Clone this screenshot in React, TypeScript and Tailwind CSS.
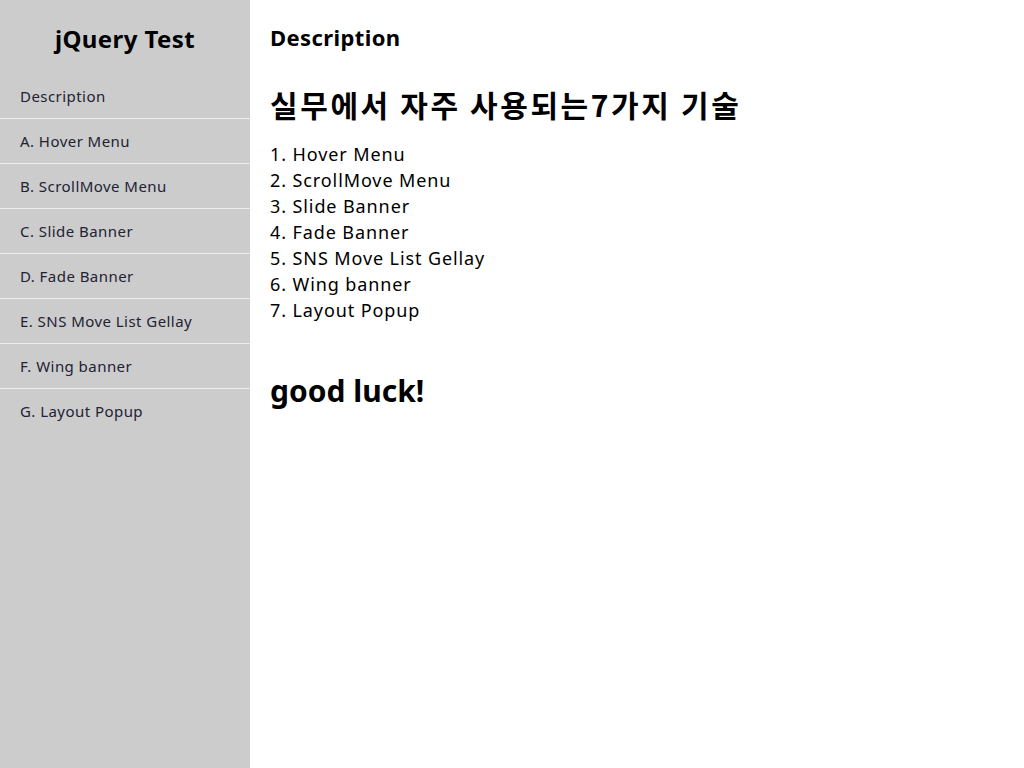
const menu = [
    'Description',
    'A. Hover Menu',
    'B. ScrollMove Menu',
    'C. Slide Banner',
    'D. Fade Banner',
    'E. SNS Move List Gellay',
    'F. Wing banner',
    'G. Layout Popup',
];

const items = [
    'Hover Menu',
    'ScrollMove Menu',
    'Slide Banner',
    'Fade Banner',
    'SNS Move List Gellay',
    'Wing banner',
    'Layout Popup',
];

export default function App() {
    return (
        <div className="flex min-h-screen font-['Noto_Sans','Noto_Sans_CJK_KR',sans-serif] text-black bg-white">
            {/* sidebar */}
            <aside className="w-[250px] shrink-0 bg-[#cccccc] min-h-screen">
                <h1 className="mt-[21px] mb-[17px] text-center text-[24px] leading-[36px] font-bold tracking-[0.4px]">jQuery Test</h1>
                <ul>
                    {menu.map((m, i) => (
                        <li key={m} className={i < menu.length - 1 ? 'border-b border-[#eeeeee]' : ''}>
                            <a href="#" className="block pl-5 text-[15px] leading-[44px] tracking-[0.45px] text-[#222233]">{m}</a>
                        </li>
                    ))}
                </ul>
            </aside>

            {/* content */}
            <main className="flex-1 px-5">
                <h2 className="mt-[22px] text-[22px] leading-[30px] font-bold tracking-[0.4px]">Description</h2>
                <h3 className="mt-[32px] text-[30px] leading-[40px] font-bold font-['Noto_Sans_CJK_KR',sans-serif] tracking-[2.6px]">실무에서 자주 사용되는7가지 기술</h3>
                <ol className="mt-[17px] text-[18px] leading-[26px] tracking-[0.9px]">
                    {items.map((t, i) => (
                        <li key={t}>{i + 1}. {t}</li>
                    ))}
                </ol>
                <p className="mt-[48px] text-[30px] leading-[40px] font-bold">good luck!</p>
            </main>
        </div>
    );
}
